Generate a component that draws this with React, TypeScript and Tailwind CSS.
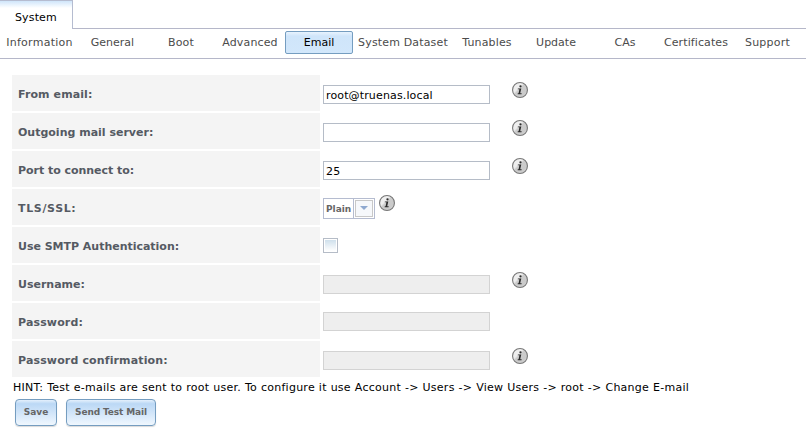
import type { ReactNode } from "react";

const tabs = [
  { label: "Information", width: "w-[76px] pr-px tracking-[0.27px]" },
  { label: "General", width: "w-[69px]" },
  { label: "Boot", width: "w-[69px] pr-px tracking-[0.14px]" },
  { label: "Advanced", width: "w-[69px] pr-px tracking-[0.14px]" },
  { label: "Email", width: "w-[68px] mr-px" },
  { label: "System Dataset", width: "w-[98px] tracking-[0.16px]" },
  { label: "Tunables", width: "w-[70px] tracking-[0.14px]" },
  { label: "Update", width: "w-[69px] pr-px" },
  { label: "CAs", width: "w-[69px] pr-px" },
  { label: "Certificates", width: "w-[73px] pr-px tracking-[0.1px]" },
  { label: "Support", width: "w-[69px] tracking-[0.24px]" },
];

function InfoIcon({ id }: { id: string }) {
  return (
    <svg width="16" height="16" viewBox="0 0 16 16" className="block shrink-0">
      <defs>
        <linearGradient id={id} x1="0" y1="0" x2="1" y2="1">
          <stop offset="0" stopColor="#f0f0f0" />
          <stop offset="0.38" stopColor="#eeeeee" />
          <stop offset="0.46" stopColor="#cccccc" />
          <stop offset="0.75" stopColor="#cacaca" />
          <stop offset="1" stopColor="#e6e6e6" />
        </linearGradient>
      </defs>
      <circle cx="8" cy="8" r="7.45" fill={`url(#${id})`} stroke="#777777" strokeWidth="1.1" />
      <circle cx="8.5" cy="4.3" r="1.15" fill="#2b2b2b" />
      <path d="M5.9 6.4h3.4L8.2 11.3h1.5l-.2.9H5.6l.2-.9h.8l.8-4H5.7z" fill="#2b2b2b" />
    </svg>
  );
}

function Row({ label, tracking = "", children }: { label: string; tracking?: string; children: ReactNode }) {
  return (
    <div className="flex h-9">
      <div className={`flex w-[308px] shrink-0 items-center bg-[#f4f4f4] pl-1.5 pt-1 font-bold text-[#555a63] ${tracking}`}>
        {label}
      </div>
      <div className="flex items-start pl-[3px]">{children}</div>
    </div>
  );
}

function Field({ value = "", info, disabled = false, raised = false }: { value?: string; info?: string; disabled?: boolean; raised?: boolean }) {
  return (
    <>
      <input
        aria-label={info ?? "password"}
        defaultValue={value}
        disabled={disabled}
        className={`h-[19px] w-[167px] border px-0.5 pt-0.5 tracking-[0.14px] text-black ${raised ? "mt-[9px]" : "mt-2.5"} ${
          disabled ? "border-[#d3d3d3] bg-[#eeeeee]" : "border-[#b5bcc7] bg-white"
        }`}
      />
      {info && (
        <div className="ml-[22px] mt-[7px]">
          <InfoIcon id={info} />
        </div>
      )}
    </>
  );
}

const buttonClass =
  "h-[27px] rounded-[4px] border border-[#759dc0] bg-linear-to-b from-[#e4f0fc] from-0% via-[#bbd8f5] via-15% to-[#f0f7fe] text-[9px] font-bold leading-[23px] text-[#666666] shadow-[0_1px_1px_rgba(0,0,0,0.15)]";

export default function App() {
  return (
    <div className="h-[443px] w-[806px] overflow-hidden bg-white font-['DejaVu_Sans',sans-serif] text-[11px] leading-[14px] text-black">
      <div className="flex h-[29px]">
        <div className="w-[73px] border-r border-t border-[#b5bcd0] bg-linear-to-b from-[#cfe5fa] to-white to-[7px] pl-[15px] pt-[10px] tracking-[0.14px]">
          System
        </div>
        <div className="flex-1 border-b border-[#b5b7c9]" />
      </div>
      <nav className="flex h-[30px] border-b border-[#b5b7c9] pl-0.5 pt-0.5">
        {tabs.map((tab) => (
          <div
            key={tab.label}
            className={`flex h-[23px] shrink-0 items-center justify-center whitespace-nowrap border ${tab.width} ${
              tab.label === "Email"
                ? "rounded-[2px] border-[#759dc0] bg-linear-to-b from-[#e8f3fe] from-0% via-[#cfe5fa] via-20% to-[#d2e7fb] text-black"
                : "border-transparent text-[#4b4b4b]"
            }`}
          >
            {tab.label}
          </div>
        ))}
      </nav>
      <main className="pl-3 pt-4">
        <div className="flex flex-col gap-0.5">
          <Row label="From email:" tracking="tracking-[0.1px]">
            <Field value="root@truenas.local" info="from" />
          </Row>
          <Row label="Outgoing mail server:">
            <Field info="server" />
          </Row>
          <Row label="Port to connect to:" tracking="tracking-[-0.04px]">
            <Field value="25" info="port" />
          </Row>
          <Row label="TLS/SSL:" tracking="tracking-[0.65px]">
            <div className="mt-[9px] flex h-[21px] w-[52px] border border-[#b5bcd0] text-[9px] font-bold text-[#666666]">
              <span className="w-[30px] shrink-0 border-r border-[#b5bcd0] pl-0.5 pt-[3px]">Plain</span>
              <span className="m-px flex flex-1 items-start justify-center border border-[#c8c8c8] bg-[#f6f8fb] pt-[5px]">
                <svg width="8" height="4" viewBox="0 0 8 4" className="block">
                  <path d="M0 0h8L4 4z" fill="#8fa9d0" />
                </svg>
              </span>
            </div>
            <div className="ml-1 mt-1.5">
              <InfoIcon id="tls" />
            </div>
          </Row>
          <Row label="Use SMTP Authentication:" tracking="tracking-[-0.02px]">
            <div className="mt-[11px] size-[15px] border border-[#b5bcc7] p-px">
              <div className="h-full bg-linear-to-b from-[#cfe0ec] to-white" />
            </div>
          </Row>
          <Row label="Username:">
            <Field disabled info="username" />
          </Row>
          <Row label="Password:" tracking="tracking-[0.14px]">
            <Field disabled raised />
          </Row>
          <Row label="Password confirmation:" tracking="tracking-[0.14px]">
            <Field disabled info="confirmation" />
          </Row>
        </div>
        <p className="ml-px mt-1 whitespace-nowrap tracking-[0.26px] [word-spacing:0.15px]">
          HINT: Test e-mails are sent to root user. To configure it use Account -&gt; Users -&gt; View Users -&gt; root -&gt; Change E-mail
        </p>
        <div className="ml-[3px] mt-1 flex gap-[9px]">
          <button className={`w-[42px] ${buttonClass}`}>Save</button>
          <button className={`w-[90px] tracking-[-0.12px] ${buttonClass}`}>Send Test Mail</button>
        </div>
      </main>
    </div>
  );
}
